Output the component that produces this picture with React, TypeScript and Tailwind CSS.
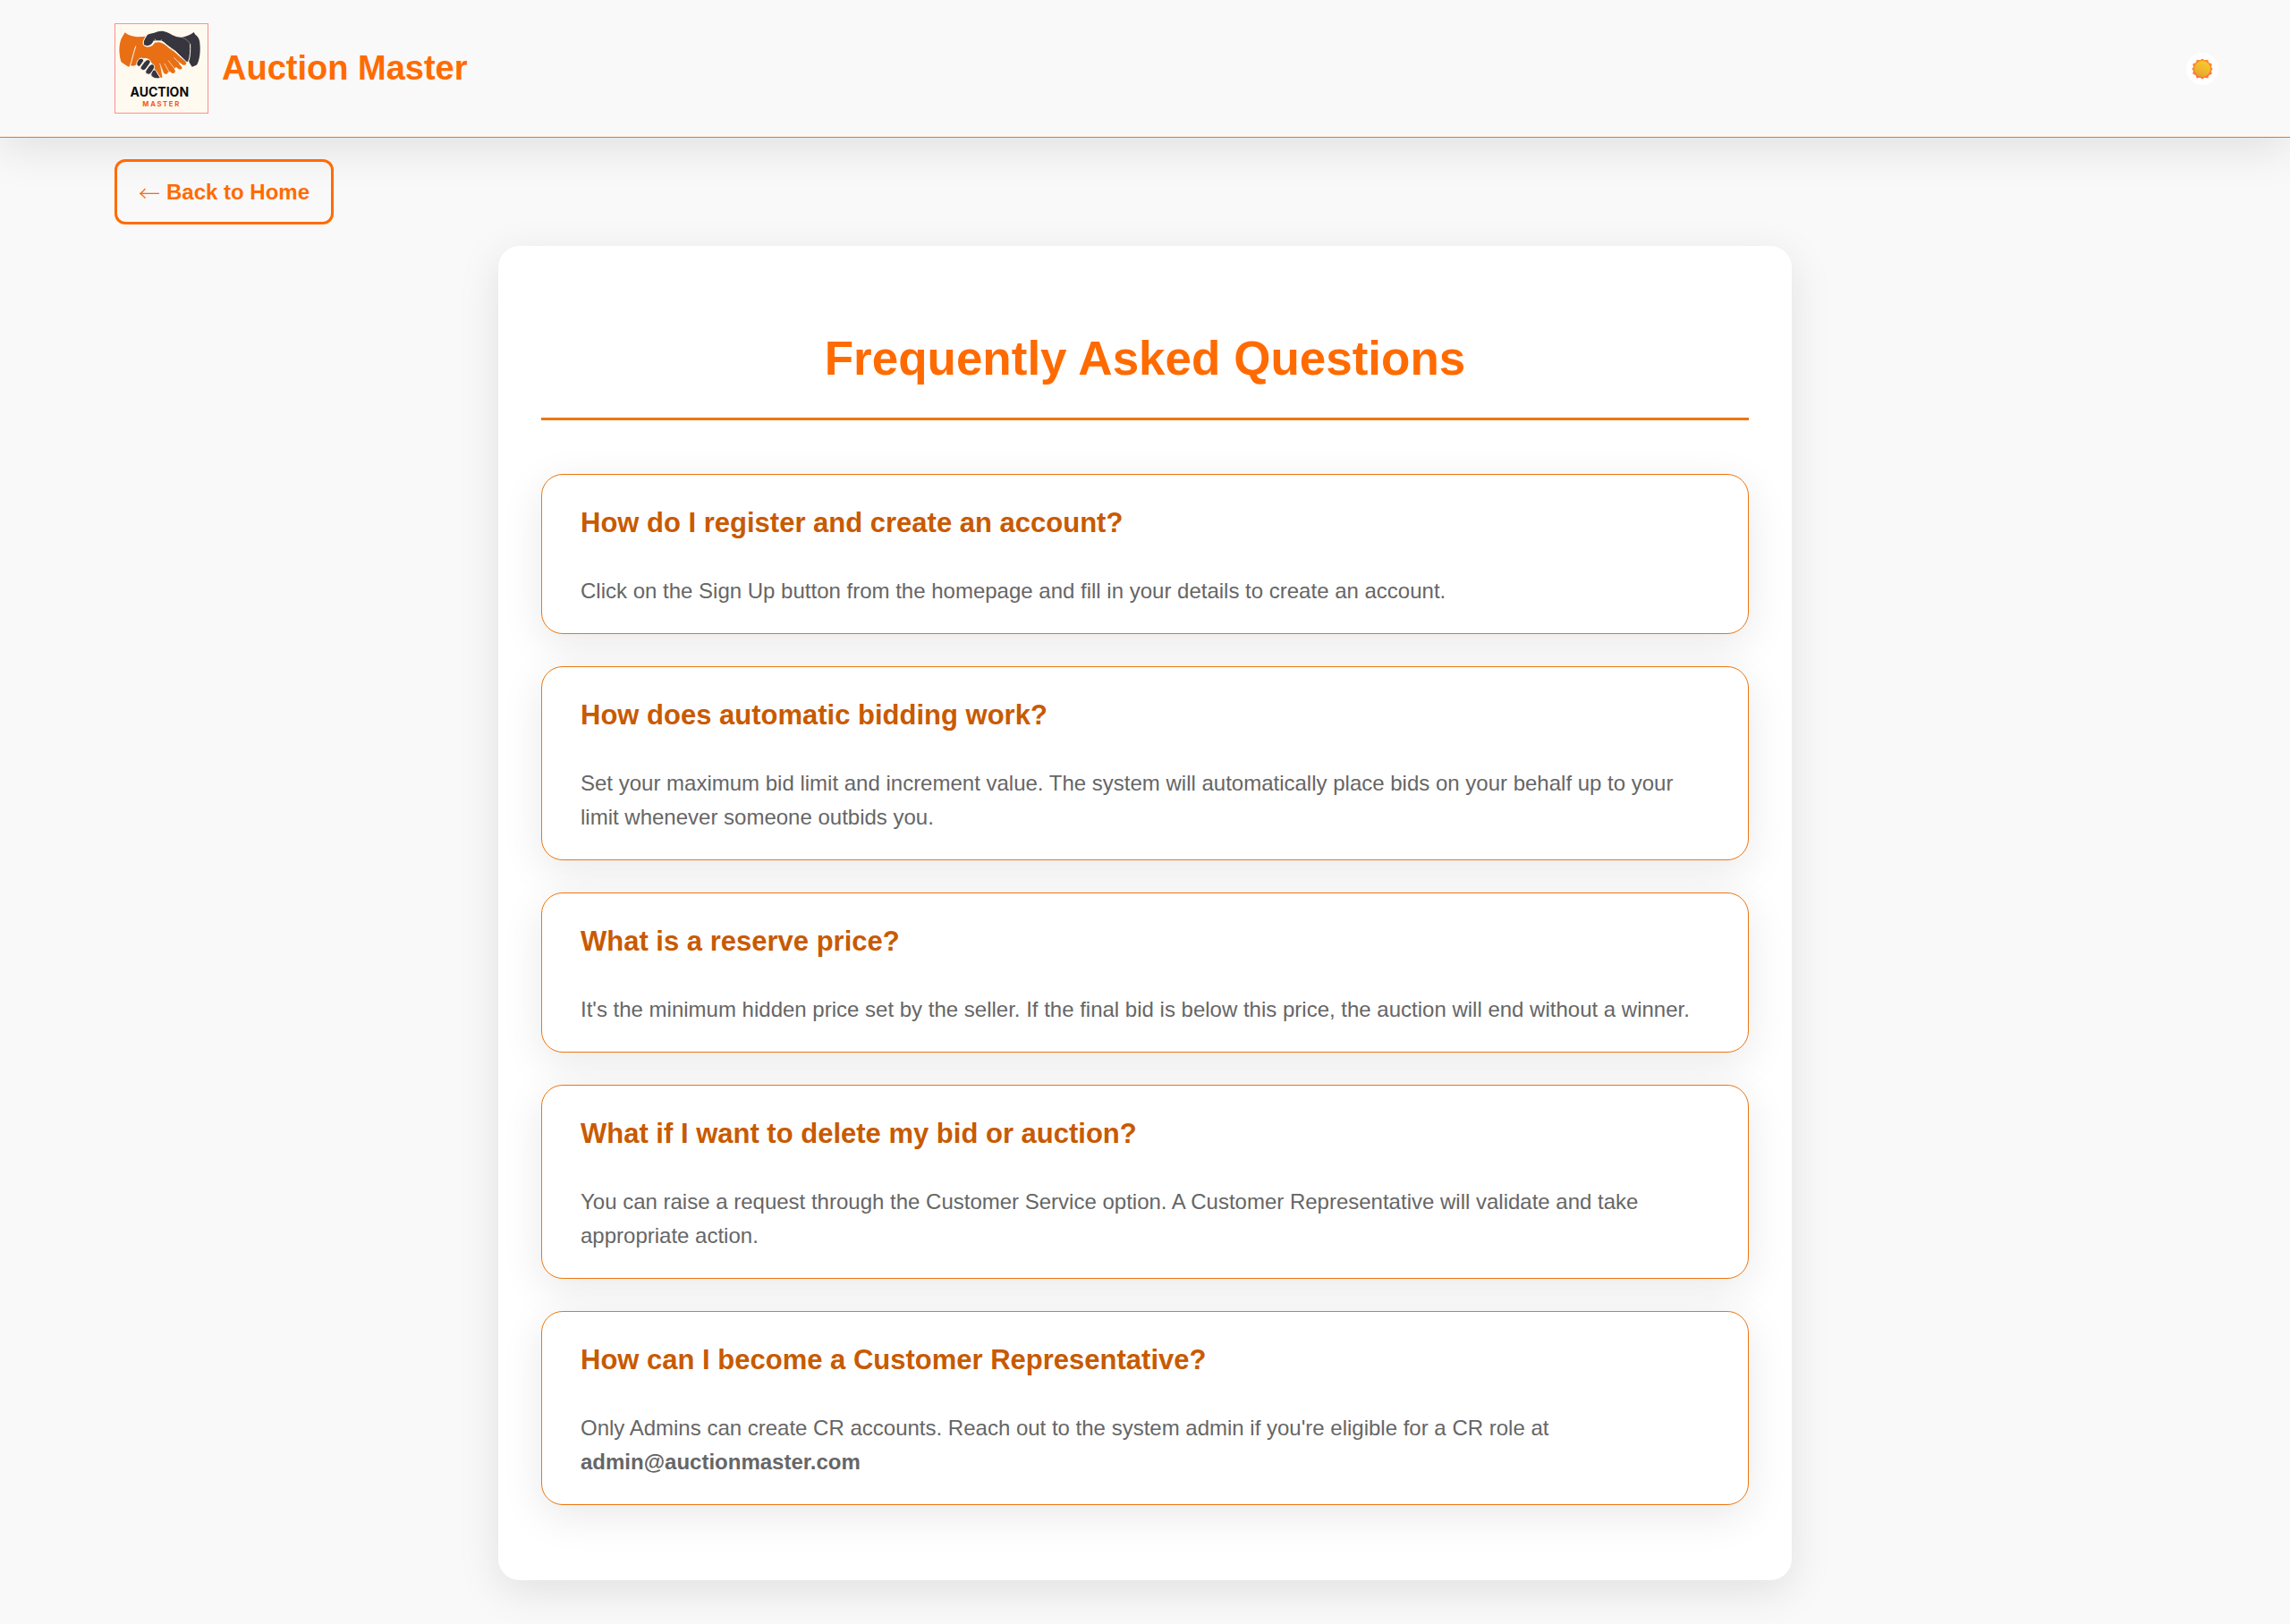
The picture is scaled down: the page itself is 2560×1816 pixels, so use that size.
import type { ReactNode } from "react";

interface Faq {
  id: string;
  question: string;
  answer: ReactNode;
}

const FAQS: Faq[] = [
  {
    id: "register",
    question: "How do I register and create an account?",
    answer: "Click on the Sign Up button from the homepage and fill in your details to create an account.",
  },
  {
    id: "automatic-bidding",
    question: "How does automatic bidding work?",
    answer:
      "Set your maximum bid limit and increment value. The system will automatically place bids on your behalf up to your limit whenever someone outbids you.",
  },
  {
    id: "reserve-price",
    question: "What is a reserve price?",
    answer:
      "It's the minimum hidden price set by the seller. If the final bid is below this price, the auction will end without a winner.",
  },
  {
    id: "delete-bid",
    question: "What if I want to delete my bid or auction?",
    answer:
      "You can raise a request through the Customer Service option. A Customer Representative will validate and take appropriate action.",
  },
  {
    id: "become-cr",
    question: "How can I become a Customer Representative?",
    answer: (
      <>
        Only Admins can create CR accounts. Reach out to the system admin if you're eligible for a CR role at{" "}
        <strong>admin@auctionmaster.com</strong>
      </>
    ),
  },
];

function Logo() {
  return (
    <svg viewBox="54 48 315 303" className="h-[101px] w-[105px] shrink-0" role="img" aria-label="Auction Master logo">
      <rect x="54" y="48" width="315" height="303" fill="#fffaf0" />
      <rect x="55.5" y="49.5" width="312" height="300" fill="none" stroke="#ff8f88" strokeWidth="3" />
      {/* dark hand */}
      <path
        d="M153 121 C149 113 155 98 164 88 C169 82 178 83 187 80 C199 76 208 73 219 75 C233 77 243 86 256 91 C264 95 272 96 281 95 C288 117 299 145 302 174 C299 178 295 179 291 177 L258 141 C240 133 229 117 213 107 C199 108 190 106 184 107 C181 117 172 123 162 123 Z"
        fill="#37353d"
      />
      <path
        d="M280 95 C297 93 309 86 320 78 L325 86 C333 92 339 99 340 114 C343 142 340 168 331 186 C327 190 321 192 314 194 C309 187 305 181 301 174 Z"
        fill="#37353d"
      />
      {/* orange hand */}
      <path
        d="M89 79 C97 87 111 91 130 94 L160 92 C153 101 149 111 151 119 C158 128 174 128 182 121 C188 115 187 112 194 113 C205 110 216 114 226 122 C240 136 256 141 265 153 L292 178 C298 184 293 190 284 188 L253 165 L277 191 C285 199 279 205 269 202 L236 175 L256 204 C261 213 253 219 244 214 L224 187 L233 213 C232 220 225 220 219 215 L207 187 L213 222 C217 230 211 233 205 229 L188 205 C188 190 180 184 176 178 C169 163 158 164 153 166 C143 160 131 168 128 186 C121 192 114 192 108 189 L104 195 C93 190 82 183 76 177 C66 141 70 108 81 92 Z"
        fill="#e96f15"
      />
      <path d="M205 184 L224 180 L240 172 L258 165 L272 182 L250 206 L236 212 L218 214 Z" fill="#e96f15" />
      {/* fingers of the dark hand */}
      <g stroke="#fffaf0" strokeWidth="3" fill="#37353d">
        <path d="M131 190 C125 187 130 169 141 166 C149 164 153 170 151 176 L141 190 C138 194 134 194 131 190 Z" />
        <path d="M146 204 C138 201 141 194 148 186 C156 174 163 166 172 172 C177 177 173 183 166 192 C159 202 154 209 146 204 Z" />
        <path d="M163 218 C155 214 158 207 164 200 C170 191 176 182 185 187 C191 193 187 200 181 209 C176 217 171 222 163 218 Z" />
        <path d="M181 228 C174 223 176 217 181 209 C185 203 192 203 194 209 L207 230 C203 236 187 234 181 228 Z" />
      </g>
      {/* sleeve creases and finger gaps */}
      <g stroke="#fffaf0" fill="none" strokeLinecap="round" strokeLinejoin="round">
        <path d="M125 126 C116 151 113 174 105 194" strokeWidth="3" />
        <path d="M308 119 C308 142 309 156 302 177 L308 190" strokeWidth="3" />
        <path d="M281 95 C294 101 302 107 308 118" strokeWidth="1" />
        <path
          d="M160 92 C151 104 148 113 152 121 C160 129 176 127 183 119 L189 110 C207 104 218 110 229 121 L258 142 L296 178"
          strokeWidth="3"
        />
        <path d="M254 164 L281 191 M235 174 L260 206 M222 184 L240 216 M206 184 L220 219" strokeWidth="2" />
        <path d="M192 106 L190 102 M210 107 L211 104" strokeWidth="2" />
      </g>
      <text x="205" y="294" textAnchor="middle" fill="#0b0b0d" className="font-['Inter',sans-serif] text-[42px] font-bold">
        AUCTION
      </text>
      <text x="148" y="327" fill="#f4581c" className="font-['Inter',sans-serif] text-[23px] font-bold tracking-[5px]">
        MASTER
      </text>
    </svg>
  );
}

function SunIcon() {
  return (
    <svg viewBox="0 0 24 24" className="size-6" aria-hidden="true">
      <defs>
        <linearGradient id="sun-disc" x1="0.7" y1="0" x2="0.3" y2="1">
          <stop offset="0" stopColor="#fbc832" />
          <stop offset="0.5" stopColor="#f0ba2c" />
          <stop offset="1" stopColor="#e2a32c" />
        </linearGradient>
        <linearGradient id="sun-rays" x1="0" y1="0" x2="0" y2="1">
          <stop offset="0" stopColor="#fa8f28" />
          <stop offset="1" stopColor="#fb7442" />
        </linearGradient>
      </defs>
      <path
        d="M12 .4 L14.4 2.2 L18.2 1.8 L19.2 5 L22.8 6.6 L22 10 L23.6 12 L22 14.4 L22.8 17.6 L19.4 19.2 L18.2 22.4 L14.6 21.8 L12 23.6 L9.4 21.8 L5.8 22.4 L4.6 19.2 L1.2 17.6 L2 14.4 L.4 12 L2 10 L1.2 6.6 L4.8 5 L5.8 1.8 L9.6 2.2 Z"
        fill="url(#sun-rays)"
      />
      <circle cx="12" cy="12" r="9" fill="url(#sun-disc)" />
    </svg>
  );
}

function Header() {
  return (
    <header className="flex items-center justify-between border-b border-[#ee760f] bg-[#f9f9f9] py-[26px] pr-20 pl-32 shadow-[0_12px_48px_rgba(0,0,0,0.1)]">
      <div className="flex items-center gap-[15px]">
        <Logo />
        <span className="text-[38px] font-bold text-[#ff6b00]">Auction Master</span>
      </div>
      <button
        type="button"
        aria-label="Toggle theme"
        className="flex size-9 items-center justify-center rounded-full bg-white"
      >
        <SunIcon />
      </button>
    </header>
  );
}

function FaqCard({ question, answer }: Omit<Faq, "id">) {
  return (
    <section className="mb-9 rounded-3xl border border-[#ee760f] bg-white px-[43px] pt-[29px] pb-7 shadow-[0_12px_48px_rgba(0,0,0,0.09)]">
      <h2 className="mb-8 text-[31px] leading-[50px] font-bold text-[#c85a00]">{question}</h2>
      <p className="text-2xl leading-[38px] text-[#666666]">{answer}</p>
    </section>
  );
}

export default function App() {
  return (
    <div className="min-h-screen bg-[#f9f9f9] font-['Liberation_Sans',Arial,sans-serif]">
      <Header />
      <div className="px-32 pt-6">
        <a
          href="#home"
          className="inline-flex h-[73px] items-center gap-[7px] rounded-xl border-3 border-[#ff6b00] px-6 text-2xl font-bold text-[#ff6b00]"
        >
          <span className="font-['Noto_Sans_CJK_SC',sans-serif] font-light">←</span>
          <span>Back to Home</span>
        </a>
      </div>
      <main className="mx-auto mt-6 w-full max-w-[1446px] rounded-3xl bg-white px-12 pt-[84px] pb-12 shadow-[0_12px_48px_rgba(0,0,0,0.1)]">
        <h1 className="mb-[60px] border-b-3 border-[#ee760f] pb-6 text-center text-[53px] leading-[84px] font-bold text-[#ff6b00]">
          Frequently Asked Questions
        </h1>
        {FAQS.map((faq) => (
          <FaqCard key={faq.id} question={faq.question} answer={faq.answer} />
        ))}
      </main>
    </div>
  );
}
